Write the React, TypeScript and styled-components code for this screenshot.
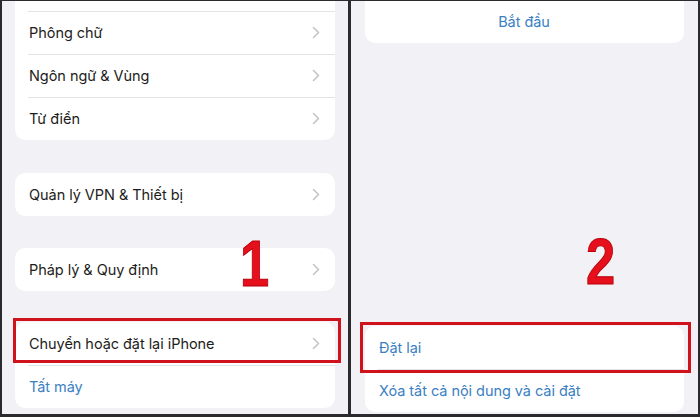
import styled, { createGlobalStyle } from 'styled-components';

const GlobalStyle = createGlobalStyle`
  html, body {
    margin: 0;
    padding: 0;
    background: #2b2b2d;
  }
  * {
    box-sizing: border-box;
  }
`;

const Frame = styled.div`
  width: 700px;
  height: 417px;
  display: grid;
  grid-template-columns: 346px 347px;
  column-gap: 3px;
  padding: 1px 2px 3px 2px;
  background: #2b2b2d;
  font-family: Inter, 'Noto Sans', sans-serif;
  overflow: hidden;
`;

const Panel = styled.section<{ $pad: number }>`
  position: relative;
  display: flex;
  flex-direction: column;
  padding: 0 ${({ $pad }) => $pad}px 2px;
  background: #f1f1f6;
  overflow: hidden;
`;

const Card = styled.div<{ $top?: number; $pushDown?: boolean }>`
  position: relative;
  margin-top: ${({ $top, $pushDown }) => ($pushDown ? 'auto' : `${$top ?? 0}px`)};
  background: #ffffff;
  border-radius: 10px;
  flex-shrink: 0;
`;

const Row = styled.div<{ $sep?: boolean; $center?: boolean }>`
  position: relative;
  height: 43px;
  display: flex;
  align-items: center;
  justify-content: ${({ $center }) => ($center ? 'center' : 'space-between')};
  padding: 0 15px 0 14px;

  ${({ $sep }) =>
    $sep &&
    `
    &::before {
      content: '';
      position: absolute;
      top: 0;
      left: 13px;
      right: 0;
      height: 1px;
      background: #e3e3e8;
    }
  `}
`;

const Label = styled.span<{ $link?: boolean }>`
  font-size: 14.5px;
  letter-spacing: -0.05px;
  color: ${({ $link }) => ($link ? '#3a80c2' : '#1d1d20')};
`;

const Highlight = styled.div<{ $l: number; $r: number; $t: number; $b: number }>`
  position: relative;

  &::after {
    content: '';
    position: absolute;
    top: ${({ $t }) => -$t}px;
    left: ${({ $l }) => -$l}px;
    right: ${({ $r }) => -$r}px;
    bottom: ${({ $b }) => -$b}px;
    border: 3px solid #d0121c;
    pointer-events: none;
  }
`;

const StepNumber = styled.div<{ $x: number; $y: number }>`
  position: absolute;
  left: ${({ $x }) => $x}px;
  top: ${({ $y }) => $y}px;
  font-family: 'Liberation Sans', Arial, sans-serif;
  font-weight: 700;
  font-size: 64px;
  line-height: 1;
  color: #e5101b;
  -webkit-text-stroke: 1px #b8000a;
  transform: scaleX(0.82);
  transform-origin: left top;
`;

const Chevron = () => (
  <svg width="8" height="13" viewBox="0 0 8 13" fill="none">
    <path d="M1.5 1.5 L6.5 6.5 L1.5 11.5" stroke="#c4c4c9" strokeWidth="1.6" strokeLinecap="round" strokeLinejoin="round" />
  </svg>
);

const NavRow = ({ text, sep }: { text: string; sep?: boolean }) => (
  <Row $sep={sep}>
    <Label>{text}</Label>
    <Chevron />
  </Row>
);

export default function App() {
  return (
    <>
      <GlobalStyle />
      <Frame>
        <Panel $pad={13}>
          <Card $top={-33}>
            <Row />
            <NavRow text="Phông chữ" sep />
            <NavRow text="Ngôn ngữ & Vùng" sep />
            <NavRow text="Từ điển" sep />
          </Card>
          <Card $top={33}>
            <NavRow text="Quản lý VPN & Thiết bị" />
          </Card>
          <Card $top={32}>
            <NavRow text="Pháp lý & Quy định" />
          </Card>
          <Card $top={31}>
            <Highlight $l={2} $r={6} $t={4} $b={-2}>
              <NavRow text="Chuyển hoặc đặt lại iPhone" />
            </Highlight>
            <Row $sep>
              <Label $link>Tất máy</Label>
            </Row>
          </Card>
          <StepNumber $x={238} $y={231}>1</StepNumber>
        </Panel>

        <Panel $pad={14}>
          <Card $top={-44}>
            <Row />
            <Row $center>
              <Label $link>Bắt đầu</Label>
            </Row>
          </Card>
          <Card $pushDown>
            <Highlight $l={5} $r={7} $t={4} $b={4}>
              <Row>
                <Label $link>Đặt lại</Label>
              </Row>
            </Highlight>
            <Row $sep>
              <Label $link>Xóa tất cả nội dung và cài đặt</Label>
            </Row>
          </Card>
          <StepNumber $x={235} $y={229}>2</StepNumber>
        </Panel>
      </Frame>
    </>
  );
}
